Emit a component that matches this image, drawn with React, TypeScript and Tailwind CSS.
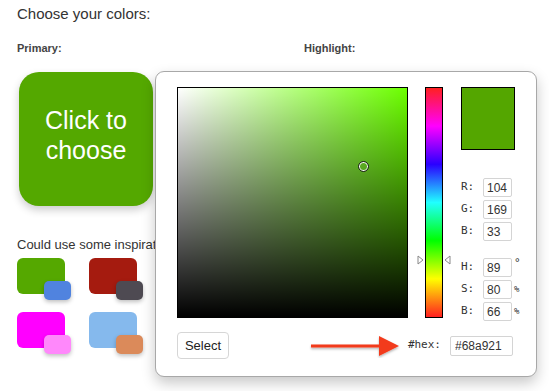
import React from "react";

const swatches = [
  { main: "#55a800", accent: "#5083df" },
  { main: "#a51b0f", accent: "#4e4a52" },
  { main: "#ff00ff", accent: "#ff88fb" },
  { main: "#85b9ed", accent: "#db8a5a" },
];

const rgbRows = [
  { label: "R:", value: "104", unit: "" },
  { label: "G:", value: "169", unit: "" },
  { label: "B:", value: "33", unit: "" },
];

const hsbRows = [
  { label: "H:", value: "89", unit: "°" },
  { label: "S:", value: "80", unit: "%" },
  { label: "B:", value: "66", unit: "%" },
];

function ValueRow({ label, value, unit }: { label: string; value: string; unit: string }) {
  return (
    <div className="flex items-center h-[19px]">
      <span className="w-[22px] font-['DejaVu_Sans_Mono',monospace] text-[11px] text-[#333]">{label}</span>
      <input
        readOnly
        value={value}
        className="w-[29px] h-[19px] border border-[#d4d4d4] rounded-[2px] px-[3px] text-[12px] text-[#333] outline-none"
      />
      <span
        className={`ml-[2px] font-['DejaVu_Sans_Mono',monospace] text-[#333] ${
          unit === "°" ? "text-[11px] -mt-[8px]" : "text-[9px]"
        }`}
      >
        {unit}
      </span>
    </div>
  );
}

function ColorPicker() {
  return (
    <div className="absolute left-[155px] top-[71px] w-[382px] h-[306px] bg-white border border-[#a8a8a8] rounded-[9px] shadow-[0_6px_14px_rgba(0,0,0,0.22)] pl-[21px] pt-[15px]">
      <div className="flex">
        {/* saturation / brightness */}
        <div className="relative w-[231px] h-[231px] border border-black bg-[#6cff00]">
          <div className="absolute inset-0 bg-linear-to-r from-white to-transparent" />
          <div className="absolute inset-0 bg-linear-to-b from-transparent to-black" />
          <div className="absolute left-[180px] top-[73px] w-[11px] h-[11px] rounded-full border border-[#222] shadow-[inset_0_0_0_1px_#fff]" />
        </div>

        {/* hue bar */}
        <div className="relative ml-[17px] w-[18px] h-[231px] border border-black bg-[linear-gradient(to_bottom,#ff2020,#ff00ff,#2a00ff,#20ffff,#00ff00,#ffff00,#ff2020)]">
          <svg className="absolute -left-[9px] top-[167px]" width="7" height="10" viewBox="0 0 7 10">
            <path d="M1 1 L6 5 L1 9 Z" fill="#fff" stroke="#888" strokeWidth="1" />
          </svg>
          <svg className="absolute -right-[9px] top-[167px]" width="7" height="10" viewBox="0 0 7 10">
            <path d="M6 1 L1 5 L6 9 Z" fill="#fff" stroke="#888" strokeWidth="1" />
          </svg>
        </div>

        {/* preview and values */}
        <div className="ml-[18px] flex flex-col">
          <div className="w-[54px] h-[63px] border border-black bg-[#54a600]" />
          <div className="mt-[28px] flex flex-col gap-[3px]">
            {rgbRows.map((r) => (
              <ValueRow key={r.label} {...r} />
            ))}
          </div>
          <div className="mt-[17px] flex flex-col gap-[3px]">
            {hsbRows.map((r, i) => (
              <ValueRow key={i} {...r} />
            ))}
          </div>
        </div>
      </div>

      <div className="mt-[11px] flex items-center w-[336px]">
        <button className="w-[52px] h-[27px] border border-[#d6d6d6] rounded-[4px] text-[13px] text-[#222] bg-white">
          Select
        </button>
        <svg className="ml-auto mr-[7px]" width="92" height="24" viewBox="0 0 92 24">
          <defs>
            <filter id="sh" x="-10%" y="-30%" width="120%" height="170%">
              <feDropShadow dx="0" dy="1.5" stdDeviation="1.2" floodOpacity="0.3" />
            </filter>
          </defs>
          <g filter="url(#sh)">
            <path d="M2 10.5 L72 10.5 L72 13.5 L2 13.5 Z" fill="#f23a1c" />
            <path d="M70 2 L90 12 L70 22 Z" fill="#f23a1c" />
          </g>
        </svg>
        <span className="font-['DejaVu_Sans_Mono',monospace] text-[11px] text-[#333]">#hex:</span>
        <input
          readOnly
          value="#68a921"
          className="ml-[9px] w-[63px] h-[20px] border border-[#d4d4d4] rounded-[2px] px-[4px] text-[12px] text-[#333] outline-none"
        />
      </div>
    </div>
  );
}

export default function App() {
  return (
    <div className="relative w-[549px] h-[391px] bg-white overflow-hidden font-['Liberation_Sans',Arial,sans-serif] text-[#333]">
      <div className="pl-[17px] pt-[5px]">
        <h1 className="text-[15px] leading-[18px] text-[#333]">Choose your colors:</h1>

        <div className="mt-[17px] grid grid-cols-[287px_1fr]">
          <span className="text-[11px] font-bold text-[#444]">Primary:</span>
          <span className="text-[11px] font-bold text-[#444]">Highlight:</span>
        </div>

        {/* primary color button */}
        <button className="mt-[15px] ml-[2px] w-[134px] h-[134px] rounded-[20px] bg-[#54a800] shadow-[0_4px_8px_rgba(0,0,0,0.2)] text-white text-[25px] leading-[30px] flex items-center justify-center text-center pb-[8px]">
          Click to
          <br />
          choose
        </button>

        <p className="mt-[31px] text-[13px] leading-[16px] text-[#333]">Could use some inspiration?</p>

        <div className="mt-[5px] grid grid-cols-[72px_72px] gap-y-[12px]">
          {swatches.map((s, i) => (
            <div key={i} className="relative w-[54px] h-[42px]">
              <div className="w-[48px] h-[36px] rounded-[6px]" style={{ backgroundColor: s.main }} />
              <div
                className="absolute left-[27px] top-[23px] w-[27px] h-[19px] rounded-[5px] shadow-[0_2px_4px_rgba(0,0,0,0.25)]"
                style={{ backgroundColor: s.accent }}
              />
            </div>
          ))}
        </div>
      </div>

      <ColorPicker />
    </div>
  );
}
